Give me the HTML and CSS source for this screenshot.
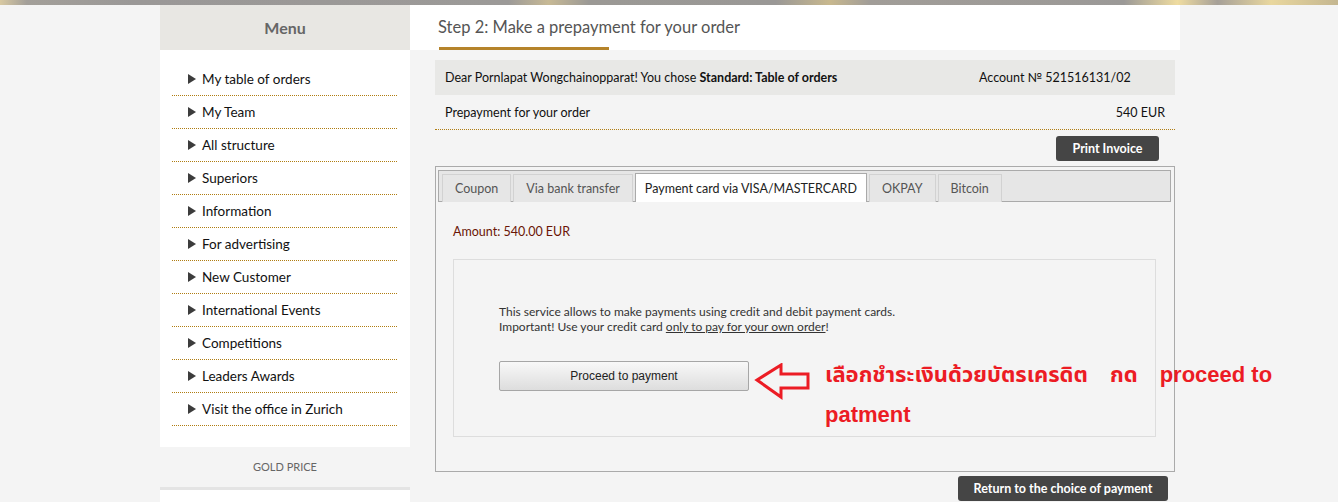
FILE: index.html
```html
<!DOCTYPE html>
<html lang="en">
<head>
    <meta charset="UTF-8">
    <meta name="viewport" content="width=device-width, initial-scale=1.0">
    <title>Step 2: Make a prepayment</title>
    <link rel="stylesheet" href="styles.css">
</head>
<body>
    <div class="top-strip"></div>

    <div class="page">
        <!-- Left menu -->
        <aside class="sidebar">
            <div class="menu-head">Menu</div>
            <ul class="menu">
                <li><span class="arrow"></span>My table of orders</li>
                <li><span class="arrow"></span>My Team</li>
                <li><span class="arrow"></span>All structure</li>
                <li><span class="arrow"></span>Superiors</li>
                <li><span class="arrow"></span>Information</li>
                <li><span class="arrow"></span>For advertising</li>
                <li><span class="arrow"></span>New Customer</li>
                <li><span class="arrow"></span>International Events</li>
                <li><span class="arrow"></span>Competitions</li>
                <li><span class="arrow"></span>Leaders Awards</li>
                <li><span class="arrow"></span>Visit the office in Zurich</li>
            </ul>
            <div class="gold-price">GOLD PRICE</div>
            <div class="sidebar-rest"></div>
        </aside>

        <main class="main">
            <div class="main-head">
                <h1 class="title">Step 2: Make a prepayment for your order</h1>
                <div class="title-bar"></div>
            </div>

            <div class="main-body">
                <div class="order-info">
                    <div class="info-row shade">
                        <div class="info-cell">Dear Pornlapat Wongchainopparat! You chose <b>Standard: Table of orders</b></div>
                        <div class="info-cell">Account № 521516131/02</div>
                    </div>
                    <div class="info-row dotted">
                        <div class="info-cell">Prepayment for your order</div>
                        <div class="info-cell right">540 EUR</div>
                    </div>
                </div>

                <div class="actions">
                    <button class="dark-btn print-btn">Print Invoice</button>
                </div>

                <div class="tabs-panel">
                    <div class="tab-strip">
                        <span class="tab">Coupon</span>
                        <span class="tab">Via bank transfer</span>
                        <span class="tab active">Payment card via VISA/MASTERCARD</span>
                        <span class="tab">OKPAY</span>
                        <span class="tab">Bitcoin</span>
                    </div>
                    <div class="tab-content">
                        <div class="amount">Amount: 540.00 EUR</div>
                        <div class="card-box">
                            <p class="card-text">
                                This service allows to make payments using credit and debit payment cards.<br>
                                Important! Use your credit card <u>only to pay for your own order</u>!
                            </p>
                            <button class="proceed-btn">Proceed to payment</button>

                            <!-- red hint drawn over the screenshot -->
                            <svg class="hint-arrow" width="58" height="38" viewBox="0 0 58 38">
                                <polygon points="3,17 27,2 27,11 54,11 54,25 27,25 27,34" fill="none" stroke="#ec1c24" stroke-width="3" stroke-linejoin="miter"/>
                            </svg>
                            <div class="hint-text">เลือกชำระเงินด้วยบัตรเครดิต<span class="gap"></span>กด<span class="gap"></span>proceed to<br>patment</div>
                        </div>
                    </div>
                </div>

                <div class="actions">
                    <button class="dark-btn return-btn">Return to the choice of payment</button>
                </div>
            </div>
        </main>
    </div>
</body>
</html>
```

FILE: styles.css
```css
body {
    margin: 0;
    padding: 0;
    background-color: #f4f4f4;
    font-family: 'Lato', 'Liberation Sans', sans-serif;
    color: #111;
    overflow: hidden;
}

/* Decorative strip at the very top */
.top-strip {
    height: 5px;
    background: linear-gradient(90deg, #d8c9a2 0%, #a39f99 2%, #9a9897 10%, #9c9a98 38%, #c7b995 41%, #9b9995 44%, #9a9896 58%, #c8b88e 62%, #a19d98 65%, #9b9997 84%, #efdca0 88%, #a6a098 91%, #e9d79e 95%, #c4b690 100%);
}

.page {
    width: 1020px;
    margin-left: 160px;
    display: flex;
    align-items: flex-start;
}

/* Sidebar */
.sidebar {
    width: 250px;
    flex-shrink: 0;
}

.menu-head {
    height: 44px;
    padding-bottom: 1px;
    background-color: #e8e7e3;
    color: #666;
    font-size: 16px;
    font-weight: bold;
    display: flex;
    align-items: center;
    justify-content: center;
}

.menu {
    list-style: none;
    margin: 0;
    padding: 13px 13px 21px 12px;
    background-color: #fff;
}

.menu li {
    height: 32px;
    border-bottom: 1px dotted #b07d12;
    display: flex;
    align-items: center;
    padding-left: 16px;
    font-size: 13.5px;
    color: #111;
}

.arrow {
    width: 0;
    height: 0;
    border-left: 8px solid #3c3c3c;
    border-top: 5px solid transparent;
    border-bottom: 5px solid transparent;
    margin-right: 6px;
}

.gold-price {
    height: 38px;
    padding-bottom: 2px;
    background-color: #f4f4f4;
    border-bottom: 3px solid #e4e4e4;
    display: flex;
    align-items: center;
    justify-content: center;
    font-size: 11px;
    color: #666;
}

.sidebar-rest {
    height: 30px;
    background-color: #fff;
}

/* Main column */
.main {
    width: 770px;
    flex-shrink: 0;
}

.main-head {
    height: 45px;
    background-color: #fff;
    padding-left: 28px;
    display: flex;
    flex-direction: column;
}

.title {
    margin: 12px 0 0;
    font-size: 16.5px;
    font-weight: normal;
    line-height: 20px;
    color: #555;
}

.title-bar {
    margin-top: auto;
    margin-left: 1px;
    width: 170px;
    height: 3px;
    background-color: #b5832a;
}

.main-body {
    padding: 10px 5px 0 25px;
}

.order-info {
    font-size: 12.5px;
}

.info-row {
    display: grid;
    grid-template-columns: 1fr 206px;
    height: 35px;
    align-items: center;
}

.info-row.shade {
    background-color: #e8e8e6;
}

.info-row.dotted {
    height: 34px;
    border-bottom: 1px dotted #b07d12;
}

.info-cell {
    padding: 0 10px;
}

.info-cell.right {
    text-align: right;
}

.actions {
    display: flex;
    justify-content: flex-end;
}

.dark-btn {
    background-color: #454545;
    color: #fff;
    border: none;
    border-radius: 3px;
    font-family: 'Lato', 'Liberation Sans', sans-serif;
    font-size: 12.5px;
    font-weight: bold;
    height: 25px;
    padding: 0;
    cursor: pointer;
}

.print-btn {
    width: 103px;
    margin: 6px 16px 5px 0;
}

.return-btn {
    width: 210px;
    margin: 4px 7px 0 0;
}

/* Tabs */
.tabs-panel {
    border: 1px solid #aaa;
    padding: 3px 3px 0 2px;
}

.tab-strip {
    display: flex;
    gap: 2px;
    background-color: #e6e6e6;
    border: 1px solid #aaa;
    padding: 3px 3px 0 3px;
    height: 27px;
    align-items: flex-end;
}

.tab {
    height: 27px;
    margin-bottom: -1px;
    padding: 0 12px;
    display: flex;
    align-items: center;
    font-size: 12.5px;
    color: #555;
    background-color: #e6e6e6;
    border: 1px solid #d2d2d2;
    border-bottom: none;
}

.tab.active {
    background-color: #fff;
    color: #222;
    border-color: #aaa;
    height: 28px;
    padding: 0 9px;
}

.tab-content {
    padding: 22px 15px 34px 15px;
}

.amount {
    font-size: 12.5px;
    color: #6a1505;
    margin-bottom: 20px;
}

.card-box {
    position: relative;
    border: 1px solid #ddd;
    padding: 44px 0 45px 45px;
}

.card-text {
    margin: 0 0 27px;
    font-size: 12px;
    line-height: 15px;
    color: #333;
}

.card-text u {
    text-decoration: underline;
}

.proceed-btn {
    display: block;
    width: 250px;
    height: 30px;
    border: 1px solid #a6a6a6;
    border-radius: 2px;
    background: linear-gradient(to bottom, #f8f8f8, #dddddd);
    font-family: 'Liberation Sans', sans-serif;
    font-size: 12px;
    color: #222;
    cursor: pointer;
}

.hint-arrow {
    position: absolute;
    left: 300px;
    top: 103px;
}

.hint-text {
    position: absolute;
    left: 371px;
    top: 95px;
    width: 500px;
    font-family: 'Liberation Sans', 'Noto Sans Thai', 'DejaVu Sans', sans-serif;
    font-size: 22px;
    font-weight: bold;
    line-height: 40px;
    color: #ec1c24;
    white-space: nowrap;
}

.gap {
    display: inline-block;
    width: 22px;
}
```
